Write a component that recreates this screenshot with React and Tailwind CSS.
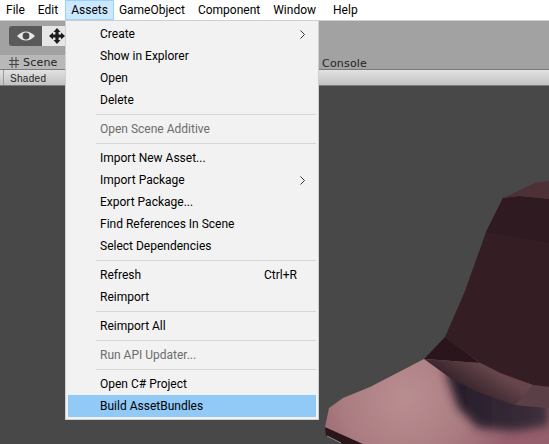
import { Fragment } from "react";

const menuFont = { fontFamily: 'Roboto, sans-serif' };
const unityFont = { fontFamily: '"DejaVu Sans", sans-serif' };

const topMenu = ["File", "Edit", "Assets", "GameObject", "Component", "Window", "Help"];

const groups = [
  [{ label: "Create", arrow: true }, { label: "Show in Explorer" }, { label: "Open" }, { label: "Delete" }],
  [{ label: "Open Scene Additive", disabled: true }],
  [
    { label: "Import New Asset..." },
    { label: "Import Package", arrow: true },
    { label: "Export Package..." },
    { label: "Find References In Scene" },
    { label: "Select Dependencies" },
  ],
  [{ label: "Refresh", shortcut: "Ctrl+R" }, { label: "Reimport" }],
  [{ label: "Reimport All" }],
  [{ label: "Run API Updater...", disabled: true }],
  [{ label: "Open C# Project" }, { label: "Build AssetBundles", active: true }],
];

const Arrow = () => (
  <svg viewBox="0 0 5 9" className="absolute right-[11px] top-[7px] h-[9px] w-[5px]" fill="none" stroke="#333" strokeWidth="1">
    <path d="M0.5 0.5 L4.5 4.5 L0.5 8.5" />
  </svg>
);

const MenuRow = ({ item }) => (
  <div
    className={`relative flex h-[22px] items-center pl-[32px] text-[12px] ${item.active ? "bg-[#91c9f7]" : ""} ${
      item.disabled ? "text-[#6d6d6d]" : "text-[#000]"
    }`}
  >
    <span>{item.label}</span>
    {item.shortcut && <span className="absolute left-[196px]">{item.shortcut}</span>}
    {item.arrow && <Arrow />}
  </div>
);

const AssetsMenu = () => (
  <div className="absolute left-[65px] top-[20px] z-10 w-[254px] border border-[#cfcfcf] bg-[#f2f2f2] p-[2px]" style={menuFont}>
    {groups.map((group, i) => (
      <Fragment key={i}>
        {i > 0 && (
          <div className="flex h-[7px] items-center pl-[28px]">
            <div className="h-px w-full bg-[#d7d7d7]" />
          </div>
        )}
        {group.map((item) => (
          <MenuRow key={item.label} item={item} />
        ))}
      </Fragment>
    ))}
  </div>
);

// the hat-like model in the scene view, page coordinates
const SceneModel = () => (
  <svg viewBox="0 86 549 358" className="absolute left-0 top-0 h-[358px] w-[549px]">
    <defs>
      <radialGradient id="base" gradientUnits="userSpaceOnUse" cx="405" cy="398" r="110">
        <stop offset="0" stopColor="#b98e91" />
        <stop offset="0.55" stopColor="#ab7d82" />
        <stop offset="1" stopColor="#965f6c" />
      </radialGradient>
      <linearGradient id="band" gradientUnits="userSpaceOnUse" x1="490" y1="368" x2="470" y2="400">
        <stop offset="0" stopColor="#66464b" />
        <stop offset="1" stopColor="#2c1c24" />
      </linearGradient>
      <linearGradient id="shadow" gradientUnits="userSpaceOnUse" x1="450" y1="400" x2="549" y2="400">
        <stop offset="0" stopColor="#241c28" />
        <stop offset="1" stopColor="#3f303c" />
      </linearGradient>
      <filter id="blur" x="-30%" y="-30%" width="160%" height="160%">
        <feGaussianBlur stdDeviation="5" />
      </filter>
      <clipPath id="baseClip">
        <path d="M424 359 L370 387 L343 398 L329 408 L325 427 L363 444 L549 444 L549 355 Z" />
      </clipPath>
    </defs>
    {/* dark lip under the brim */}
    <path d="M325 427 L326 436 L342 444 L363 444 Z" fill="#2a1519" />
    <path d="M327 436 L341 443" stroke="#8e9690" strokeWidth="1" />
    {/* brim */}
    <path d="M424 359 L370 387 L343 398 L329 408 L325 427 L363 444 L549 444 L549 355 Z" fill="url(#base)" />
    <g clipPath="url(#baseClip)">
      <path d="M444 368 L458 408 L478 428 L515 431 L549 426 L549 395 L515 395 L480 380 Z" fill="url(#shadow)" filter="url(#blur)" />
    </g>
    {/* band */}
    <path d="M424 359 L480 363 L500 373 L533 385 L549 387 L549 408 L515 405 L480 393 L453 380 Z" fill="url(#band)" />
    <path d="M515 405 L533 385 L549 387 L549 408 Z" fill="#5a3f46" />
    {/* dark triangle and crown */}
    <path d="M445 337 L424 359 L480 363 Z" fill="#2a151c" />
    <path d="M486 232 L503 198 L519 196 L549 199 L549 387 L533 385 L500 373 L480 363 L445 337 L465 291 Z" fill="#351e23" />
    <path d="M503 198 L519 196 L549 199 L549 243 L486 232 Z" fill="#2e1a20" />
    <path d="M503 198 L535 183 L549 181 L549 199 L519 196 Z" fill="#4e3037" />
  </svg>
);

const App = () => {
  return (
    <div className="relative h-[444px] w-[549px] overflow-hidden bg-[#484848]">
      {/* menu bar */}
      <div className="flex h-[20px] items-stretch gap-[1px] bg-white text-[12px] text-black" style={menuFont}>
        {topMenu.map((name) => (
          <div
            key={name}
            className={`flex items-center border px-[5px] ${name === "Assets" ? "-mr-[2px] border-[#99d1ff] bg-[#cce8ff]" : "border-transparent"} ${name === "Help" ? "ml-[4px]" : ""}`}
          >
            {name}
          </div>
        ))}
      </div>

      {/* toolbar */}
      <div className="relative h-[49px] border-t border-[#d0d0d0] bg-[#a2a2a2]">
        <div className="absolute left-[9px] top-[5px] flex h-[20px] w-[60px] overflow-hidden rounded-[3px]">
          <div className="flex w-[33px] items-center justify-center bg-[#5a5a5a]">
            <svg viewBox="0 0 20 12" className="h-[12px] w-[20px]">
              <path d="M1 6 Q10 -3 19 6 Q10 15 1 6 Z" fill="#e8e8e8" />
              <circle cx="10" cy="6" r="3.4" fill="#4a4a4a" />
            </svg>
          </div>
          <div className="flex flex-1 items-center justify-start bg-[#e6e6e6] pl-[7px]">
            <svg viewBox="0 0 16 16" className="h-[16px] w-[16px] shrink-0">
              <path d="M8 0 L11.5 4 L9.6 4 L9.6 6.4 L12 6.4 L12 4.5 L16 8 L12 11.5 L12 9.6 L9.6 9.6 L9.6 12 L11.5 12 L8 16 L4.5 12 L6.4 12 L6.4 9.6 L4 9.6 L4 11.5 L0 8 L4 4.5 L4 6.4 L6.4 6.4 L6.4 4 L4.5 4 Z" fill="#1c1c1c" />
            </svg>
          </div>
        </div>
        <div className="absolute left-0 top-[34px] flex h-[14px] w-[65px] items-center gap-[4px] bg-[#b8b8b8] pl-[9px] pt-[2px] text-[11px] tracking-[0.2px] text-[#222]" style={unityFont}>
          <svg viewBox="0 0 10 11" className="-mt-[2px] h-[11px] w-[10px]" fill="none" stroke="#444" strokeWidth="1">
            <path d="M3 0 V11 M7 0 V11 M0 3.5 H10 M0 7.5 H10" />
          </svg>
          <span>Scene</span>
        </div>
        <div className="absolute left-[322px] top-[35px] h-[14px] text-[11px] leading-[15px] tracking-[0.2px] text-[#222]" style={unityFont}>
          Console
        </div>
      </div>

      {/* scene header */}
      <div className="flex h-[17px] items-center border-y border-[#7a7a7a] bg-gradient-to-b from-[#e2e2e2] to-[#c2c2c2] text-[10px] text-[#222]" style={{ fontFamily: '"Liberation Sans", sans-serif' }}>
        <div className="h-full w-[4px] border-r border-[#9a9a9a]" />
        <span className="pl-[6px] pt-[2px] tracking-[0.3px]">Shaded</span>
      </div>

      {/* scene view */}
      <div className="relative h-[358px] bg-[#484848]">
        <SceneModel />
      </div>

      <AssetsMenu />
    </div>
  );
};

export default App;
